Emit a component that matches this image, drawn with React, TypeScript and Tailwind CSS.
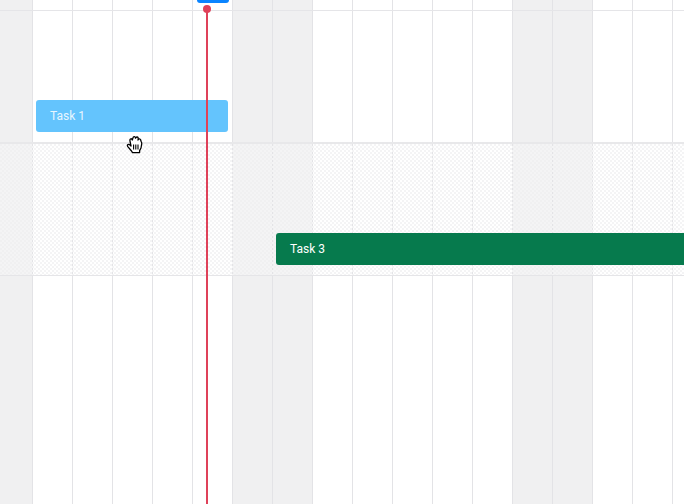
const weekend = [true, false, false, false, false, false, true, true, false, false, false, false, false, true, true, false, false, false]

function Columns() {
  return (
    <div className="absolute inset-0 flex">
      {weekend.map((off, i) => (
        <div
          key={i}
          className={`h-full shrink-0 border-r border-[#e3e3e6] ${i === 0 ? 'w-[33px]' : 'w-[40px]'} ${off ? 'bg-[#f0f0f1]' : ''}`}
        />
      ))}
    </div>
  )
}

function HandCursor() {
  return (
    <svg className="absolute left-[126px] top-[135px]" width="18" height="19" viewBox="0 0 18 19">
      <path
        d="M5.5 16 L1.8 11.6 Q0.9 10.2 2 9.5 Q3 9 4 10 L5 11 L3.9 5.6 Q3.7 4 4.8 3.8 Q5.9 3.6 6.3 5 L6.9 3 Q7.2 1.5 8.4 1.6 Q9.5 1.7 9.5 3.2 Q10 1.8 11.2 2 Q12.4 2.3 12.2 3.8 L12 5 Q12.8 3.6 13.9 4 Q15 4.5 14.8 5.8 L15.3 6.8 Q15.9 7.5 15.7 9 L15 13 L13.6 15.6 L13.6 17.6 L6.5 17.6 Z"
        fill="#fff"
        stroke="#000"
        strokeWidth="1.3"
        strokeLinejoin="round"
      />
      <path d="M7.6 9.5 V14.5 M9.8 9.5 V14.5 M12 9.5 V14.5" stroke="#000" strokeWidth="1.1" fill="none" />
    </svg>
  )
}

export default function App() {
  return (
    <div className="relative h-[504px] w-[684px] overflow-hidden bg-white font-['Roboto',sans-serif] text-xs text-white">
      <Columns />

      <div className="relative flex h-full flex-col">
        <div className="h-[11px] shrink-0 border-b border-[#e5e5e8]" />

        <div className="flex h-[133px] shrink-0 items-end border-b-2 border-[#e8e8ea] pb-[10px] pl-[36px]">
          <div className="flex h-8 w-[192px] items-center rounded-[3px] bg-[#64c4fd] pl-3.5 text-[#e8f6ff]">Task 1</div>
        </div>

        <div className="flex h-[132px] shrink-0 items-end border-b border-[#e5e5e8] bg-[repeating-conic-gradient(#f4f4f5_0_25%,#ffffff00_0_50%)] bg-[length:4px_4px] pb-[10px] pl-[276px]">
          <div className="flex h-8 flex-1 items-center rounded-l-[3px] bg-[#067a4d] pl-3.5">Task 3</div>
        </div>
      </div>

      <div className="absolute left-[197px] top-0 h-[3px] w-8 rounded-b-[3px] bg-[#0a84ff]" />
      <div className="absolute bottom-0 left-[206px] top-[8px] w-0.5 bg-[#df4159]" />
      <div className="absolute left-[203px] top-[5px] size-2 rounded-full bg-[#df4159]" />
      <HandCursor />
    </div>
  )
}
